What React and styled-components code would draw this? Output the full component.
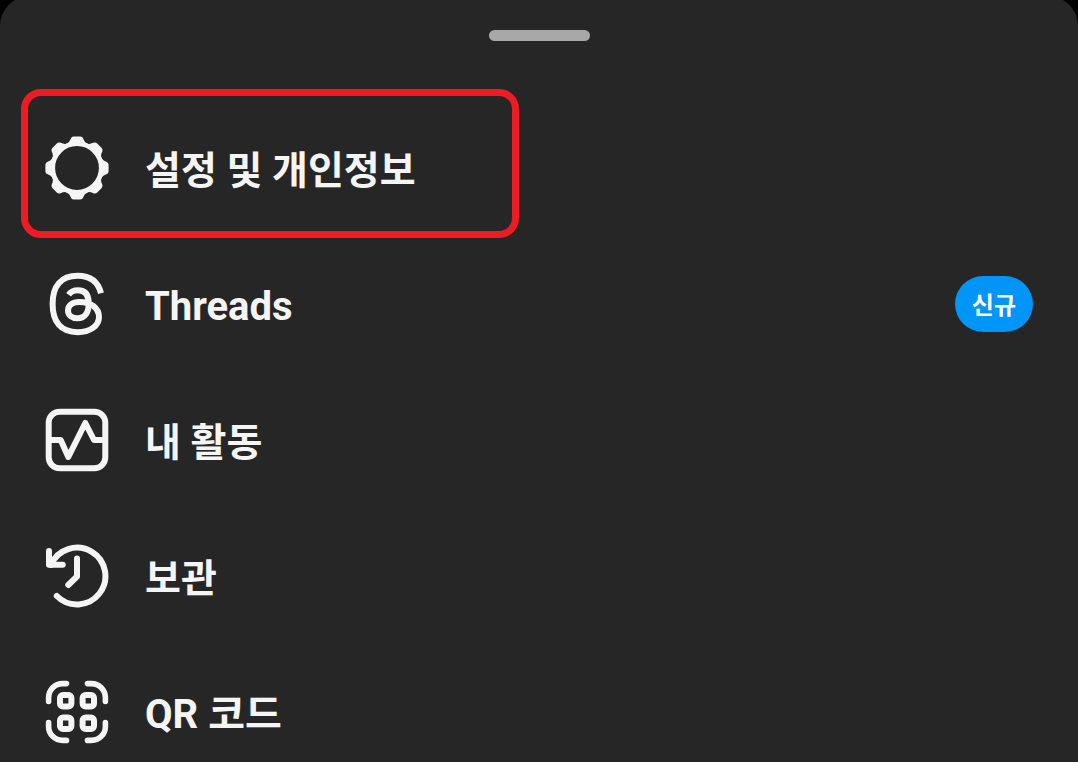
import React from "react";
import styled, { createGlobalStyle, css } from "styled-components";

const GlobalStyle = createGlobalStyle`
  html {
    scrollbar-width: none;
  }

  body {
    margin: 0;
    background: #000000;
    font-family: Roboto, "Noto Sans CJK KR", sans-serif;
  }
`;

const Sheet = styled.main`
  display: flex;
  flex-direction: column;
  align-items: center;
  box-sizing: border-box;
  min-height: 100vh;
  margin-top: -4px;
  padding-top: 34px;
  background: #262626;
  border-radius: 30px 30px 0 0;
`;

const Handle = styled.div`
  width: 101px;
  height: 11px;
  margin-bottom: 59px;
  background: #a8a8a8;
  border-radius: 6px;
`;

const Menu = styled.nav`
  width: 100%;
`;

const MenuList = styled.ul`
  margin: 0;
  padding: 0;
  list-style: none;
`;

const highlight = css`
  &::after {
    content: "";
    position: absolute;
    top: -11px;
    bottom: -2px;
    left: 21px;
    width: 498px;
    max-width: calc(100% - 42px);
    box-sizing: border-box;
    border: 7px solid #ed1c24;
    border-radius: 20px;
    pointer-events: none;
  }
`;

const MenuItem = styled.li`
  position: relative;
  ${({ $highlighted }) => $highlighted && highlight}
`;

const MenuLink = styled.a`
  display: flex;
  align-items: center;
  gap: 36px;
  min-height: 136px;
  padding: 0 45px;
  box-sizing: border-box;
  color: #f5f5f5;
  text-decoration: none;
`;

const Label = styled.span`
  flex: 1;
  padding-top: 6px;
  font-size: ${({ $latin }) => ($latin ? "40px" : "39px")};
  font-weight: 700;
  line-height: 56px;
`;

const Badge = styled.span`
  padding: 4px 17px 0;
  background: #0095f6;
  border-radius: 28px;
  color: #ffffff;
  font-size: 24px;
  font-weight: 700;
  line-height: 52px;
`;

const Icon = styled.svg`
  flex: none;
  width: 64px;
  height: 64px;
  fill: none;
  stroke: currentColor;
  stroke-width: 6;
  stroke-linecap: round;
  stroke-linejoin: round;
`;

const GearIcon = () => (
  <Icon viewBox="-32 -32 64 64" aria-hidden="true">
    <circle r="24.3" strokeWidth="4.8" />
    {[0, 45, 90, 135, 180, 225, 270, 315].map((angle) => (
      <path
        key={angle}
        transform={`rotate(${angle})`}
        d="M-10 -24.4C-8 -25.6 -7.2 -27 -6.3 -29.3Q-5.4 -31.6 -3.4 -31.6H3.4Q5.4 -31.6 6.3 -29.3C7.2 -27 8 -25.6 10 -24.4Z"
        fill="currentColor"
        stroke="none"
      />
    ))}
  </Icon>
);

const ThreadsIcon = () => (
  <Icon viewBox="0 0 64 64" aria-hidden="true">
    <path
      strokeLinecap="butt"
      d="M56 21.2C53 9.5 45 3.8 32.7 3.8C16 3.8 7.6 14 7.6 32C7.6 50 16 60.2 32.7 60.2C45 60.2 54 53.8 54 45C54 36 46 29.9 34.5 29.9C27 29.9 23 33.5 23 38.5C23 43.2 27 46.3 32.5 46.3C40 46.3 43.7 40.5 43.7 31.5C43.7 22.5 40 18.3 32.9 18.3C28.8 18.3 26 19.4 23.6 22.8"
    />
  </Icon>
);

const ActivityIcon = () => (
  <Icon viewBox="0 0 64 64" aria-hidden="true">
    <rect x="3.7" y="3.7" width="56.6" height="56.6" rx="11" />
    <path d="M4 32H15.7L23.3 49L40.3 15L49 32H60" />
  </Icon>
);

const ArchiveIcon = () => (
  <Icon viewBox="0 0 64 64" aria-hidden="true">
    <path d="M11.8 52A28.4 28.4 0 1 0 5.9 20.9" />
    <path d="M4 6.9V20.7H17.7" />
    <path d="M32 14.5V32.5L23.3 41" />
  </Icon>
);

const QrIcon = () => (
  <Icon viewBox="0 0 64 64" aria-hidden="true">
    <path
      strokeWidth="5.6"
      d="M3.6 21.5V17.6A14 14 0 0 1 17.6 3.6H21.5M42.5 3.6H46.4A14 14 0 0 1 60.4 17.6V21.5M60.4 42.5V46.4A14 14 0 0 1 46.4 60.4H42.5M21.5 60.4H17.6A14 14 0 0 1 3.6 46.4V42.5"
    />
    <rect x="15" y="15" width="11.4" height="11.4" rx="3" />
    <rect x="37.6" y="15" width="11.4" height="11.4" rx="3" />
    <rect x="15" y="37.6" width="11.4" height="11.4" rx="3" />
    <rect x="37.6" y="37.6" width="11.4" height="11.4" rx="3" />
  </Icon>
);

const items = [
  { id: "settings", label: "설정 및 개인정보", icon: GearIcon, highlighted: true },
  { id: "threads", label: "Threads", icon: ThreadsIcon, latin: true, badge: "신규" },
  { id: "activity", label: "내 활동", icon: ActivityIcon },
  { id: "archive", label: "보관", icon: ArchiveIcon },
  { id: "qr", label: "QR 코드", icon: QrIcon, latin: true },
];

const App = () => (
  <>
    <GlobalStyle />
    <Sheet>
      <Handle />
      <Menu>
        <MenuList>
          {items.map(({ id, label, icon: ItemIcon, latin, badge, highlighted }) => (
            <MenuItem key={id} $highlighted={highlighted}>
              <MenuLink href={`#${id}`}>
                <ItemIcon />
                <Label $latin={latin}>{label}</Label>
                {badge && <Badge>{badge}</Badge>}
              </MenuLink>
            </MenuItem>
          ))}
        </MenuList>
      </Menu>
    </Sheet>
  </>
);

export default App;
